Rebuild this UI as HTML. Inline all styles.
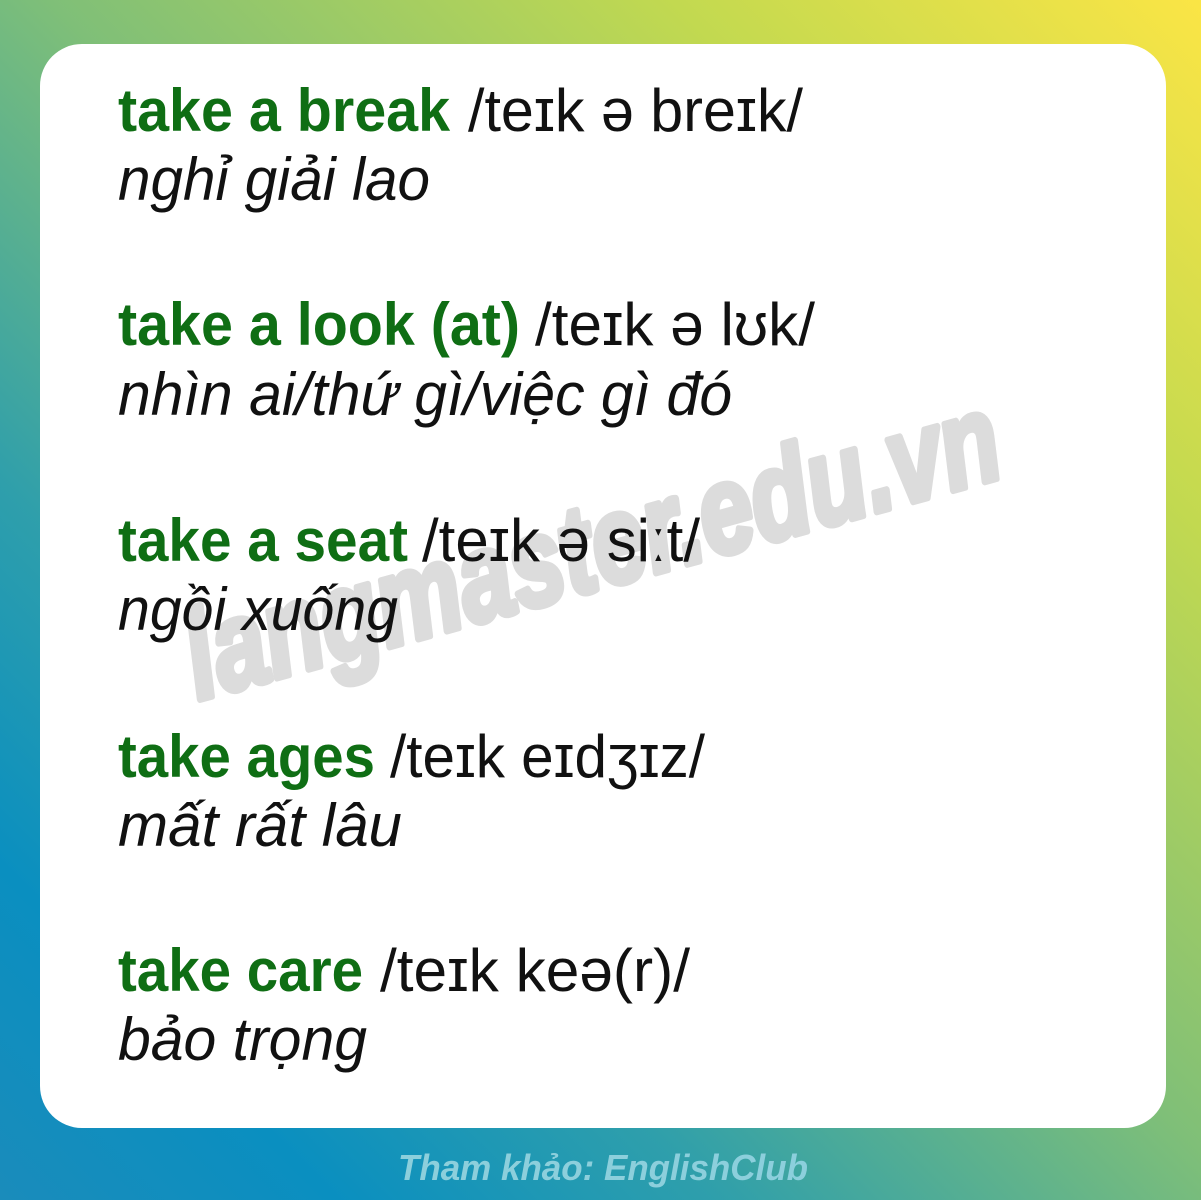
<!DOCTYPE html>
<html><head><meta charset="utf-8"><style>
html,body{margin:0;padding:0;width:1201px;height:1200px;overflow:hidden}
body{background:linear-gradient(to bottom left,#fbe545 0%,#c2d950 22%,#7fbf78 48%,#2f9fab 70%,#0a8fc0 86%,#1a8cbb 100%)}
svg{position:absolute;left:0;top:0}
</style></head><body>
<svg width="1201" height="1200" viewBox="0 0 1201 1200">
<rect x="40" y="44" width="1126" height="1084" rx="42" fill="#fff"/>
<text x="0" y="0" transform="translate(198,700) rotate(-15.5)" font-family="Liberation Sans, sans-serif" font-weight="bold" font-style="italic" font-size="125" fill="#dcdcdc" stroke="#dcdcdc" stroke-width="7" stroke-linejoin="round" textLength="840" lengthAdjust="spacingAndGlyphs">langmaster.edu.vn</text>
<g font-family="Liberation Sans, sans-serif" font-size="60">
<g font-weight="bold" fill="#0f6e14">
<text x="118" y="131" textLength="332" lengthAdjust="spacingAndGlyphs">take a break</text>
<text x="118" y="345" textLength="402" lengthAdjust="spacingAndGlyphs">take a look (at)</text>
<text x="118" y="561" textLength="290" lengthAdjust="spacingAndGlyphs">take a seat</text>
<text x="118" y="777" textLength="257" lengthAdjust="spacingAndGlyphs">take ages</text>
<text x="118" y="991" textLength="245" lengthAdjust="spacingAndGlyphs">take care</text>
</g>
<g fill="#111">
<text x="468" y="131" textLength="335" lengthAdjust="spacingAndGlyphs">/teɪk ə breɪk/</text>
<text x="535" y="345" textLength="280" lengthAdjust="spacingAndGlyphs">/teɪk ə lʊk/</text>
<text x="422" y="561" textLength="278" lengthAdjust="spacingAndGlyphs">/teɪk ə siːt/</text>
<text x="390" y="777" textLength="315" lengthAdjust="spacingAndGlyphs">/teɪk eɪdʒɪz/</text>
<text x="380" y="991" textLength="310" lengthAdjust="spacingAndGlyphs">/teɪk keə(r)/</text>
</g>
<g fill="#111" font-style="italic">
<text x="118" y="200" textLength="312" lengthAdjust="spacingAndGlyphs">nghỉ giải lao</text>
<text x="118" y="415" textLength="614" lengthAdjust="spacingAndGlyphs">nhìn ai/thứ gì/việc gì đó</text>
<text x="118" y="630" textLength="280" lengthAdjust="spacingAndGlyphs">ngồi xuống</text>
<text x="118" y="846" textLength="284" lengthAdjust="spacingAndGlyphs">mất rất lâu</text>
<text x="118" y="1060" textLength="249" lengthAdjust="spacingAndGlyphs">bảo trọng</text>
</g>
</g>
<text x="398" y="1180" font-family="Liberation Sans, sans-serif" font-weight="bold" font-style="italic" font-size="36" fill="#8ccfdc" textLength="410" lengthAdjust="spacingAndGlyphs">Tham khảo: EnglishClub</text>
</svg>
</body></html>
